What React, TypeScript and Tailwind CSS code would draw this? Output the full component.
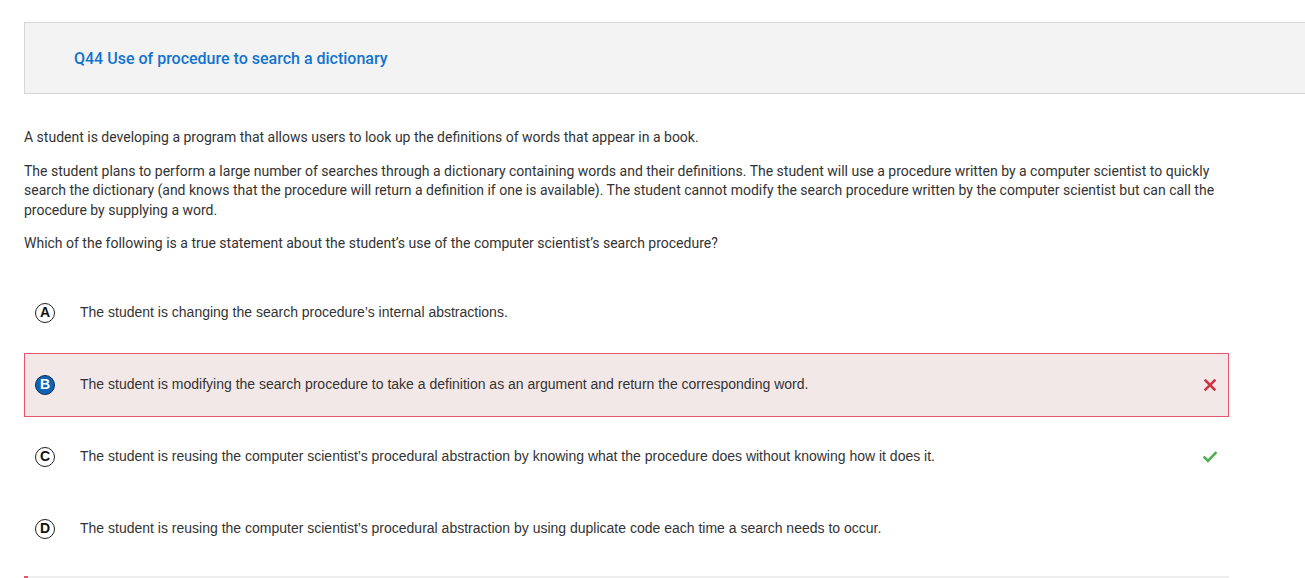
import { useState } from 'react';

type Choice = {
  letter: string;
  text: string;
  state?: 'wrong' | 'right';
};

const choices: Choice[] = [
  { letter: 'A', text: 'The student is changing the search procedure\u2019s internal abstractions.' },
  {
    letter: 'B',
    text: 'The student is modifying the search procedure to take a definition as an argument and return the corresponding word.',
    state: 'wrong',
  },
  {
    letter: 'C',
    text: 'The student is reusing the computer scientist\u2019s procedural abstraction by knowing what the procedure does without knowing how it does it.',
    state: 'right',
  },
  {
    letter: 'D',
    text: 'The student is reusing the computer scientist\u2019s procedural abstraction by using duplicate code each time a search needs to occur.',
  },
];

function WrongMark() {
  return (
    <svg width="12" height="12" viewBox="0 0 12 12" className="text-[#cf3445]">
      <path d="M1.5 1.5 L10.5 10.5 M10.5 1.5 L1.5 10.5" stroke="currentColor" strokeWidth="2.5" strokeLinecap="square" />
    </svg>
  );
}

function RightMark() {
  return (
    <svg width="14" height="12" viewBox="0 0 14 12" className="text-[#4caf50]">
      <path d="M1.5 6.5 L5 10 L12.5 2" stroke="currentColor" strokeWidth="2.6" fill="none" strokeLinecap="square" />
    </svg>
  );
}

export default function App() {
  const [selected] = useState('B');

  return (
    <div className="min-h-screen bg-white pt-[22px] font-['Roboto',sans-serif]">
      {/* Question header */}
      <div className="ml-6 h-[72px] bg-[#f3f3f3] border border-r-0 border-[#d6d6d6] flex items-center pl-[49px] pt-[1px]">
        <h2 className="text-[16px] font-medium text-[#1274cf]">Q44 Use of procedure to search a dictionary</h2>
      </div>

      <div className="ml-6 w-[1205px]">
        {/* Stem */}
        <div className="pt-[34px] text-[14px] leading-[19.5px] text-[#333333] space-y-[14px] pr-[4px]">
          <p>A student is developing a program that allows users to look up the definitions of words that appear in a book.</p>
          <p>
            The student plans to perform a large number of searches through a dictionary containing words and their definitions. The
            student will use a procedure written by a computer scientist to quickly search the dictionary (and knows that the procedure
            will return a definition if one is available). The student cannot modify the search procedure written by the computer
            scientist but can call the procedure by supplying a word.
          </p>
          <p>Which of the following is a true statement about the student&rsquo;s use of the computer scientist&rsquo;s search procedure?</p>
        </div>

        {/* Choices */}
        <div className="mt-[27px] flex flex-col gap-2 font-['Liberation_Sans',Arial,sans-serif] text-[14px] text-[#333333]">
          {choices.map((c) => {
            const isSel = c.letter === selected;
            return (
              <div
                key={c.letter}
                className={`h-16 flex items-center pl-[10px] pr-[10px] border ${
                  isSel ? 'bg-[#f3e8e8] border-[#e2576a]' : 'border-transparent'
                }`}
              >
                <span
                  className={`w-[20px] h-[20px] rounded-full flex items-center justify-center text-[14px] font-bold shrink-0 border-[1.5px] ${
                    isSel ? 'bg-[#1062b4] border-[#0b2d55] text-white' : 'bg-white border-[#222] text-[#111]'
                  }`}
                >
                  {c.letter}
                </span>
                <span className="ml-[25px] flex-1">{c.text}</span>
                <span className="w-4 flex justify-center">
                  {c.state === 'wrong' && <WrongMark />}
                  {c.state === 'right' && <RightMark />}
                </span>
              </div>
            );
          })}
        </div>

        {/* Footer rule */}
        <div className="mt-[15px] h-[2px] bg-[#eeeeee] flex">
          <div className="w-1 bg-[#e2576a]" />
        </div>
      </div>
    </div>
  );
}
